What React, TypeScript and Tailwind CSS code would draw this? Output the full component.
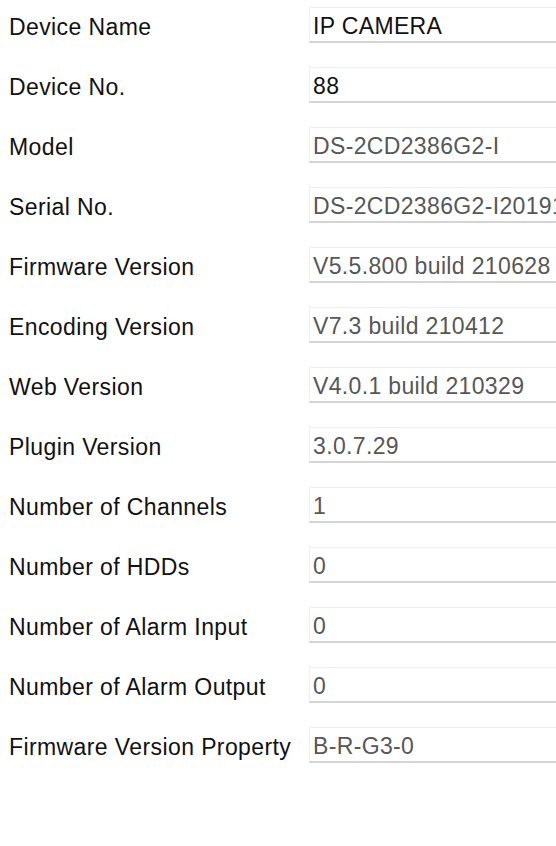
const rows: { label: string; value: string; editable?: boolean }[] = [
  { label: "Device Name", value: "IP CAMERA", editable: true },
  { label: "Device No.", value: "88", editable: true },
  { label: "Model", value: "DS-2CD2386G2-I" },
  { label: "Serial No.", value: "DS-2CD2386G2-I20191101AAWRD12345678" },
  { label: "Firmware Version", value: "V5.5.800 build 210628" },
  { label: "Encoding Version", value: "V7.3 build 210412" },
  { label: "Web Version", value: "V4.0.1 build 210329" },
  { label: "Plugin Version", value: "3.0.7.29" },
  { label: "Number of Channels", value: "1" },
  { label: "Number of HDDs", value: "0" },
  { label: "Number of Alarm Input", value: "0" },
  { label: "Number of Alarm Output", value: "0" },
  { label: "Firmware Version Property", value: "B-R-G3-0" },
];

export default function App() {
  return (
    <div className="min-h-[846px] w-[556px] overflow-hidden bg-white font-['Liberation_Sans',Arial,sans-serif]">
      {rows.map((r) => (
        <div key={r.label} className="flex h-[60px] items-start">
          <div className="w-[309px] shrink-0 whitespace-nowrap pt-[12px] pl-[9px] text-[23px] leading-[30px] tracking-[0.4px] text-[#111]">
            {r.label}
          </div>
          <div
            className={
              "mt-[7px] h-[36px] min-w-0 flex-1 overflow-hidden whitespace-nowrap border border-r-0 border-[#efefef] border-b-2 border-b-[#d4d4d4] pl-[3px] pt-[4px] text-[23px] leading-[29px] tracking-[0.35px] " +
              (r.editable ? "text-[#111]" : "text-[#575757]")
            }
          >
            {r.value}
          </div>
        </div>
      ))}
    </div>
  );
}
